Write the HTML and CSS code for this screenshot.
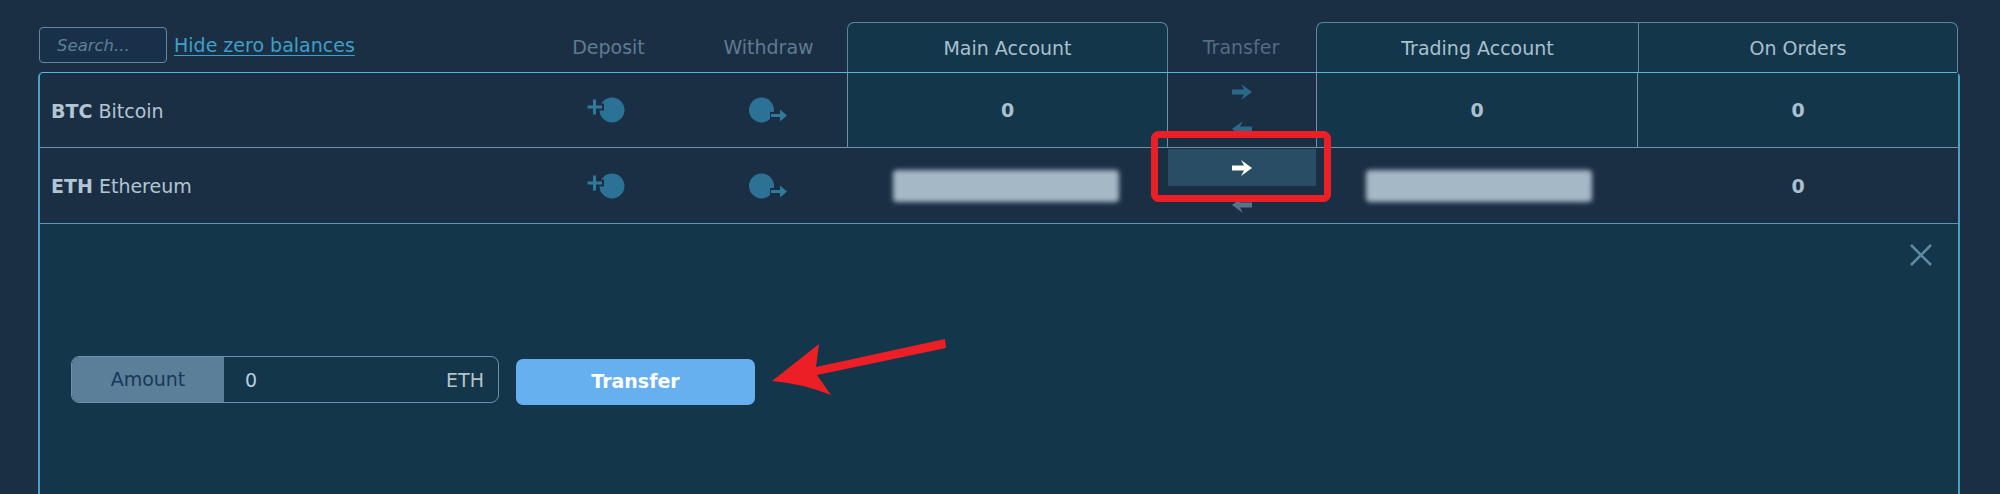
FILE: index.html
```html
<!DOCTYPE html>
<html lang="en">
<head>
<meta charset="utf-8">
<title>Balances</title>
<link rel="stylesheet" href="styles.css">
</head>
<body>
<svg width="0" height="0" class="defs">
  <defs>
    <path id="arrow-right" d="M0 5.5H12L9 0L20 8L9 16L12 10.500H0Z"/>
    <path id="arrow-left" d="M20 5.500H8L11 0L0 8L11 16L8 10.500H20Z"/>
    <g id="deposit">
      <circle cx="25" cy="13" r="12.500"/>
      <path class="plus-gap" d="M8 10H17"/>
      <path class="plus" d="M0.500 10H15M7.500 2.500V17.500"/>
    </g>
    <g id="withdraw">
      <circle cx="14.500" cy="13" r="12.500"/>
      <path class="tail-gap" d="M23 18.500H34"/>
      <path class="tail" d="M24 18.500H36"/>
      <path class="tip" d="M33 12.500L40 18.500L33 24.500Z"/>
    </g>
  </defs>
</svg>
<main class="page">
  <div class="head cols">
    <div class="tools">
      <input class="search" type="text" placeholder="Search...">
      <a class="hide-zero" href="#">Hide zero balances</a>
    </div>
    <div class="head-label head-op">Deposit</div>
    <div class="head-label head-op">Withdraw</div>
    <div class="head-box head-main">Main Account</div>
    <div class="head-label head-transfer">Transfer</div>
    <div class="head-box head-trading">Trading Account</div>
    <div class="head-box head-orders">On Orders</div>
  </div>
  <section class="table">
    <div class="row cols">
      <div class="coin"><b>BTC</b> Bitcoin</div>
      <div class="action"><svg class="op" width="40" height="26" viewBox="0 0 40 26"><use href="#deposit"/></svg></div>
      <div class="action"><svg class="op" width="40" height="26" viewBox="0 0 40 26"><use href="#withdraw"/></svg></div>
      <div class="amount tinted edge-both">0</div>
      <div class="transfer">
        <div class="move"><svg class="arrow" width="20" height="16" viewBox="0 0 20 16"><use href="#arrow-right"/></svg></div>
        <div class="move"><svg class="arrow" width="20" height="16" viewBox="0 0 20 16"><use href="#arrow-left"/></svg></div>
      </div>
      <div class="amount tinted edge-both">0</div>
      <div class="amount tinted">0</div>
    </div>
    <div class="row row-open cols">
      <div class="coin"><b>ETH</b> Ethereum</div>
      <div class="action"><svg class="op" width="40" height="26" viewBox="0 0 40 26"><use href="#deposit"/></svg></div>
      <div class="action"><svg class="op" width="40" height="26" viewBox="0 0 40 26"><use href="#withdraw"/></svg></div>
      <div class="amount"><span class="blurred blurred-main"></span></div>
      <div class="transfer transfer-open">
        <div class="move move-active"><svg class="arrow" width="20" height="16" viewBox="0 0 20 16"><use href="#arrow-right"/></svg></div>
        <div class="move move-dim"><svg class="arrow" width="20" height="16" viewBox="0 0 20 16"><use href="#arrow-left"/></svg></div>
      </div>
      <div class="amount"><span class="blurred blurred-trading"></span></div>
      <div class="amount">0</div>
    </div>
    <div class="panel">
      <button class="close" type="button" aria-label="Close">
        <svg width="22" height="22" viewBox="0 0 22 22"><path d="M1 1L21 21M21 1L1 21"/></svg>
      </button>
      <form class="form">
        <div class="field">
          <span class="field-label">Amount</span>
          <input class="field-input" type="text" value="0">
          <span class="field-unit">ETH</span>
        </div>
        <button class="submit" type="button">Transfer</button>
      </form>
    </div>
  </section>
</main>
<svg class="marks" width="2000" height="494" viewBox="0 0 2000 494">
  <rect class="mark-box" x="1154.500" y="134.500" width="173" height="64" rx="4"/>
  <path class="mark-arrow" d="M772 381L819 344L816 367L945 339L946 348L817 375L831 395Q800 383 772 381Z"/>
</svg>
</body>
</html>
```
FILE: styles.css
```css
* {
  box-sizing: border-box;
}

html,
body {
  margin: 0;
  height: 494px;
  overflow: hidden;
}

body {
  position: relative;
  background: #1a2f44;
  color: #a9c0cf;
  font-family: "DejaVu Sans", Verdana, sans-serif;
  font-size: 19px;
}

.defs {
  position: absolute;
}

.page {
  height: 494px;
  overflow: hidden;
  padding: 22px 0 0 38px;
}

.cols {
  display: grid;
  grid-template-columns: 487px 160px 160px 321px 148px 322px 320px;
}

.head {
  height: 50px;
  width: 1921px;
  padding-left: 2px;
}

.tools {
  display: flex;
  align-items: center;
  gap: 7px;
  height: 36px;
  margin: 5px 0 0 -1px;
}

.search {
  width: 128px;
  height: 36px;
  padding: 0 17px;
  background: #18304a;
  border: 1px solid #66869c;
  border-radius: 4px;
  color: #a9c0cf;
  font: italic 16.500px "DejaVu Sans", Verdana, sans-serif;
}

.search::placeholder {
  color: #5f7f96;
  opacity: 1;
}

.hide-zero {
  color: #3f9fc6;
  font-size: 19px;
  text-decoration: underline;
  text-underline-offset: 3px;
}

.head-label {
  display: flex;
  align-items: center;
  justify-content: center;
  color: #5f7b92;
}

.head-op {
  padding-left: 3px;
}

.head-transfer {
  padding-right: 2px;
  color: #536c82;
}

.head-box {
  display: flex;
  align-items: center;
  justify-content: center;
  background: #14364a;
  border: 1px solid #56889f;
  border-bottom: 0;
}

.head-main {
  border-radius: 7px 7px 0 0;
}

.head-trading {
  border-radius: 7px 0 0 0;
  border-right: 0;
}

.head-orders {
  border-radius: 0 7px 0 0;
}

.table {
  width: 1922px;
  border: 2px solid #4d9ec6;
  border-top: 1px solid #58b4da;
  border-bottom: 0;
  border-radius: 5px 5px 0 0;
}

.row {
  height: 75px;
  border-bottom: 1px solid #6d94ab;
}

.row-open {
  height: 76px;
  border-bottom-color: #5b97b3;
}

.coin {
  display: flex;
  align-items: center;
  gap: 0.32em;
  padding: 1px 0 0 11px;
  color: #b3c5d3;
}

.coin b {
  font-weight: 700;
}

.action {
  display: flex;
  align-items: center;
  justify-content: center;
}

.op {
  fill: #2b7296;
  stroke: none;
}

.plus,
.tail {
  fill: none;
  stroke: #2f7a9b;
  stroke-width: 3;
}

.plus-gap,
.tail-gap {
  fill: none;
  stroke: #1a2f44;
  stroke-width: 7;
}

.tip {
  fill: #2f7a9b;
}

.amount {
  display: flex;
  align-items: center;
  justify-content: center;
  color: #a9c0cf;
  font-weight: 700;
}

.tinted {
  background: #14364a;
}

.edge-both {
  border-left: 1px solid #6d94ab;
  border-right: 1px solid #6d94ab;
}

.blurred {
  width: 226px;
  height: 32px;
  background: #a5b8c6;
  border-radius: 4px;
  filter: blur(2.5px);
}

.blurred-main {
  margin-right: 4px;
}

.blurred-trading {
  margin-left: 4px;
}

.transfer {
  display: flex;
  flex-direction: column;
}

.transfer-open {
  padding-top: 1px;
}

.move {
  display: flex;
  align-items: center;
  justify-content: center;
  height: 37px;
  color: #2a6a88;
}

.arrow {
  fill: currentColor;
}

.move-active {
  background: #2a4d66;
  color: #fff;
}

.move-dim {
  color: #5a7288;
}

.panel {
  display: flex;
  flex-direction: column;
  height: 280px;
  padding: 20px 26px 0 31px;
  background: #14364a;
}

.close {
  align-self: flex-end;
  display: block;
  width: 22px;
  height: 22px;
  padding: 0;
  background: none;
  border: 0;
}

.close svg {
  display: block;
  fill: none;
  stroke: #5f8aa5;
  stroke-width: 2.5;
}

.form {
  display: flex;
  align-items: flex-start;
  gap: 17px;
  margin-top: 90px;
}

.field {
  display: flex;
  align-items: center;
  width: 428px;
  height: 47px;
  border: 1px solid #6b93ab;
  border-radius: 8px;
  overflow: hidden;
}

.field-label {
  display: flex;
  align-items: center;
  justify-content: center;
  flex: none;
  width: 152px;
  height: 100%;
  padding-bottom: 1px;
  background: #5c7f99;
  color: #143a5a;
}

.field-input {
  flex: 1;
  min-width: 0;
  height: 100%;
  padding: 0 0 0 21px;
  background: transparent;
  border: 0;
  color: #b7cfe0;
  font: 19px "DejaVu Sans", Verdana, sans-serif;
}

.field-unit {
  padding-right: 14px;
  color: #b4c2cc;
  font-size: 19px;
}

.submit {
  width: 239px;
  height: 46px;
  margin-top: 3px;
  padding: 0 0 2px;
  background: #66b0f0;
  border: 0;
  border-radius: 7px;
  color: #fff;
  font: 700 19px "DejaVu Sans", Verdana, sans-serif;
}

.marks {
  position: absolute;
  top: 0;
  left: 0;
  pointer-events: none;
}

.mark-box {
  fill: none;
  stroke: #ec1f26;
  stroke-width: 7;
}

.mark-arrow {
  fill: #ec1f26;
}
```
